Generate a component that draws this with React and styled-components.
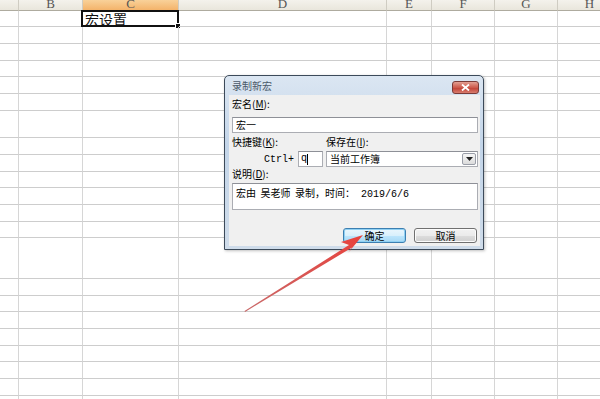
import React from 'react';
import styled, { createGlobalStyle } from 'styled-components';

const GlobalStyle = createGlobalStyle`
  html, body {
    margin: 0;
    padding: 0;
    background: #ffffff;
    overflow: hidden;
  }
`;

const colWidths = [19, 64, 96, 208, 45, 63, 63, 64];
const colLetters = ['', 'B', 'C', 'D', 'E', 'F', 'G', 'H'];
const rowBottoms = [27, 44, 61, 77, 94, 111, 138, 155, 172, 188, 205, 222, 238, 279, 296, 312, 329, 346, 362, 379, 396, 413];
const rowHeights = rowBottoms.map((b, i) => b - (i === 0 ? 11 : rowBottoms[i - 1]));

const Page = styled.div`
  position: relative;
  width: 600px;
  height: 399px;
  overflow: hidden;
  background: #fff;
`;

const Sheet = styled.div`
  display: grid;
  grid-template-columns: ${(p) => p.$cols};
  grid-template-rows: 11px ${(p) => p.$rows};
  width: 622px;
`;

const HeadCell = styled.div`
  box-sizing: border-box;
  height: 11px;
  overflow: hidden;
  display: flex;
  align-items: flex-end;
  justify-content: center;
  border-right: 1px solid #cfccc2;
  border-bottom: 1px solid #aeab9f;
  background: ${(p) => (p.$active ? 'linear-gradient(#f9d199, #f4b36a)' : 'linear-gradient(#f4f2ec, #e9e6dc)')};
  font-family: "Liberation Serif", serif;
  font-size: 13px;
  line-height: 14px;
  color: #555;
  span {
    margin-bottom: -1px;
  }
`;

const Cell = styled.div`
  position: relative;
  box-sizing: border-box;
  border-right: 1px solid #d6d6d6;
  border-bottom: 1px solid #cdcdcd;
  font-family: "Noto Sans CJK SC", sans-serif;
  font-size: 14px;
  line-height: 16px;
  color: #111;
  padding-left: 2px;
  white-space: nowrap;
`;

const Selection = styled.div`
  position: absolute;
  left: -2px;
  top: -1px;
  right: -1px;
  bottom: -1px;
  border: 2px solid #111;
  &::after {
    content: '';
    position: absolute;
    right: -4px;
    bottom: -4px;
    width: 4px;
    height: 4px;
    background: #111;
    border: 1px solid #fff;
  }
`;

const Window = styled.div`
  position: absolute;
  left: 224px;
  top: 75px;
  width: 260px;
  height: 175px;
  box-sizing: border-box;
  border: 1px solid #3c4a5a;
  border-radius: 5px 5px 0 0;
  background: linear-gradient(#dbe6f2, #c3d5e9 40%, #cfdcea);
  display: flex;
  flex-direction: column;
  box-shadow: 1px 1px 3px rgba(0, 0, 0, 0.25);
`;

const TitleBar = styled.div`
  height: 19px;
  display: flex;
  align-items: center;
  justify-content: space-between;
  padding: 0 4px 0 7px;
`;

const Title = styled.div`
  font-family: "Noto Sans CJK SC", sans-serif;
  font-size: 10px;
  color: #4a5868;
`;

const CloseBtn = styled.div`
  width: 27px;
  height: 13px;
  margin-top: 3px;
  box-sizing: border-box;
  border: 1px solid #7a3b38;
  border-radius: 3px;
  background: linear-gradient(#e3a093, #cd5a4c 50%, #c3473b 60%, #d97d6e);
  display: flex;
  align-items: center;
  justify-content: center;
`;

const Body = styled.div`
  flex: 1;
  margin: 0 3px 3px 4px;
  background: #f0f0f0;
  padding: 3px 2px 3px 3px;
  display: flex;
  flex-direction: column;
  font-family: "Noto Sans CJK SC", sans-serif;
  font-size: 10px;
  color: #000;
`;

const Label = styled.div`
  height: 12px;
  line-height: 12px;
  margin-top: ${(p) => p.$mt || 0}px;
  white-space: nowrap;
  u {
    text-decoration: underline;
  }
`;

const Field = styled.div`
  box-sizing: border-box;
  height: ${(p) => p.$h || 16}px;
  margin-top: ${(p) => p.$mt || 0}px;
  background: #fff;
  border: 1px solid #abadb3;
  border-top-color: #8e9097;
  padding: ${(p) => (p.$multi ? '2px 3px' : '0 3px')};
  line-height: 14px;
  display: flex;
  align-items: ${(p) => (p.$multi ? 'flex-start' : 'center')};
  white-space: pre;
`;

const Mono = styled.span`
  font-family: "Liberation Mono", "Noto Sans CJK SC", monospace;
  font-size: 10px;
`;

const TwoCol = styled.div`
  display: grid;
  grid-template-columns: 91px 1fr;
  column-gap: 3px;
  row-gap: 3px;
  margin-top: 3px;
`;

const Shortcut = styled.div`
  display: flex;
  align-items: center;
  justify-content: flex-end;
  gap: 4px;
  height: 16px;
`;

const SmallBox = styled(Field)`
  width: 25px;
  padding: 0 2px;
`;

const Caret = styled.span`
  display: inline-block;
  width: 1px;
  height: 11px;
  background: #000;
  margin-left: 0;
`;

const Combo = styled(Field)`
  justify-content: space-between;
  padding: 0 1px 0 3px;
`;

const DropBtn = styled.div`
  width: 14px;
  height: 12px;
  box-sizing: border-box;
  border: 1px solid #9a9ea8;
  border-radius: 2px;
  background: linear-gradient(#f6f6f6, #dcdcdc);
  display: flex;
  align-items: center;
  justify-content: center;
`;

const ButtonRow = styled.div`
  display: flex;
  justify-content: flex-end;
  gap: 8px;
  margin-top: auto;
  padding-right: 1px;
`;

const Btn = styled.div`
  width: 63px;
  height: 15px;
  box-sizing: border-box;
  border: 1px solid ${(p) => (p.$primary ? '#3c7fb1' : '#707070')};
  border-radius: 3px;
  background: ${(p) => (p.$primary
    ? 'linear-gradient(#eaf6fd, #d9f0fc 50%, #bee6fd 51%, #a7d9f5)'
    : 'linear-gradient(#f2f2f2, #ebebeb 50%, #dddddd 51%, #cfcfcf)')};
  box-shadow: ${(p) => (p.$primary ? 'inset 0 0 0 1px #8fd0f3' : 'inset 0 0 0 1px #fcfcfc')};
  display: flex;
  align-items: center;
  justify-content: center;
  line-height: 12px;
`;

const ArrowLayer = styled.svg`
  position: absolute;
  left: 0;
  top: 0;
  width: 600px;
  height: 399px;
  pointer-events: none;
`;

export default function App() {
  return (
    <Page>
      <GlobalStyle />
      <Sheet
        $cols={colWidths.map((w) => `${w}px`).join(' ')}
        $rows={rowHeights.map((h) => `${h}px`).join(' ')}
      >
        {colLetters.map((l, i) => (
          <HeadCell key={`h${i}`} $active={l === 'C'}>
            <span>{l}</span>
          </HeadCell>
        ))}
        {rowHeights.map((_, r) =>
          colWidths.map((__, c) => (
            <Cell key={`${r}-${c}`}>
              {r === 0 && c === 2 && (
                <>
                  宏设置
                  <Selection />
                </>
              )}
            </Cell>
          ))
        )}
      </Sheet>

      <Window>
        <TitleBar>
          <Title>录制新宏</Title>
          <CloseBtn>
            <svg width="9" height="7" viewBox="0 0 9 7">
              <path d="M1 0.5 L8 6.5 M8 0.5 L1 6.5" stroke="#fff" strokeWidth="1.8" />
            </svg>
          </CloseBtn>
        </TitleBar>
        <Body>
          <Label>宏名(<u>M</u>):</Label>
          <Field $mt={7}>宏一</Field>
          <TwoCol>
            <Label>快捷键(<u>K</u>):</Label>
            <Label>保存在(<u>I</u>):</Label>
            <Shortcut>
              <Mono>Ctrl+</Mono>
              <SmallBox>
                <Mono>q</Mono>
                <Caret />
              </SmallBox>
            </Shortcut>
            <Combo>
              <span>当前工作簿</span>
              <DropBtn>
                <svg width="7" height="4" viewBox="0 0 7 4">
                  <path d="M0 0 L7 0 L3.5 4 Z" fill="#222" />
                </svg>
              </DropBtn>
            </Combo>
          </TwoCol>
          <Label $mt={1}>说明(<u>D</u>):</Label>
          <Field $mt={3} $h={27} $multi>
            <span>
              {'宏由  吴老师  录制，时间：'}<Mono>{' 2019/6/6'}</Mono>
            </span>
          </Field>
          <ButtonRow>
            <Btn $primary>确定</Btn>
            <Btn>取消</Btn>
          </ButtonRow>
        </Body>
      </Window>

      <ArrowLayer viewBox="0 0 600 399">
        <defs>
          <linearGradient id="arrowGrad" x1="245" y1="312" x2="362" y2="236" gradientUnits="userSpaceOnUse">
            <stop offset="0" stopColor="#c96a6a" />
            <stop offset="1" stopColor="#e8413c" />
          </linearGradient>
        </defs>
        <polygon
          points="245,312 352,247.5 348,253 363,235 341,242 349,245 244.5,311"
          fill="url(#arrowGrad)"
        />
      </ArrowLayer>
    </Page>
  );
}
